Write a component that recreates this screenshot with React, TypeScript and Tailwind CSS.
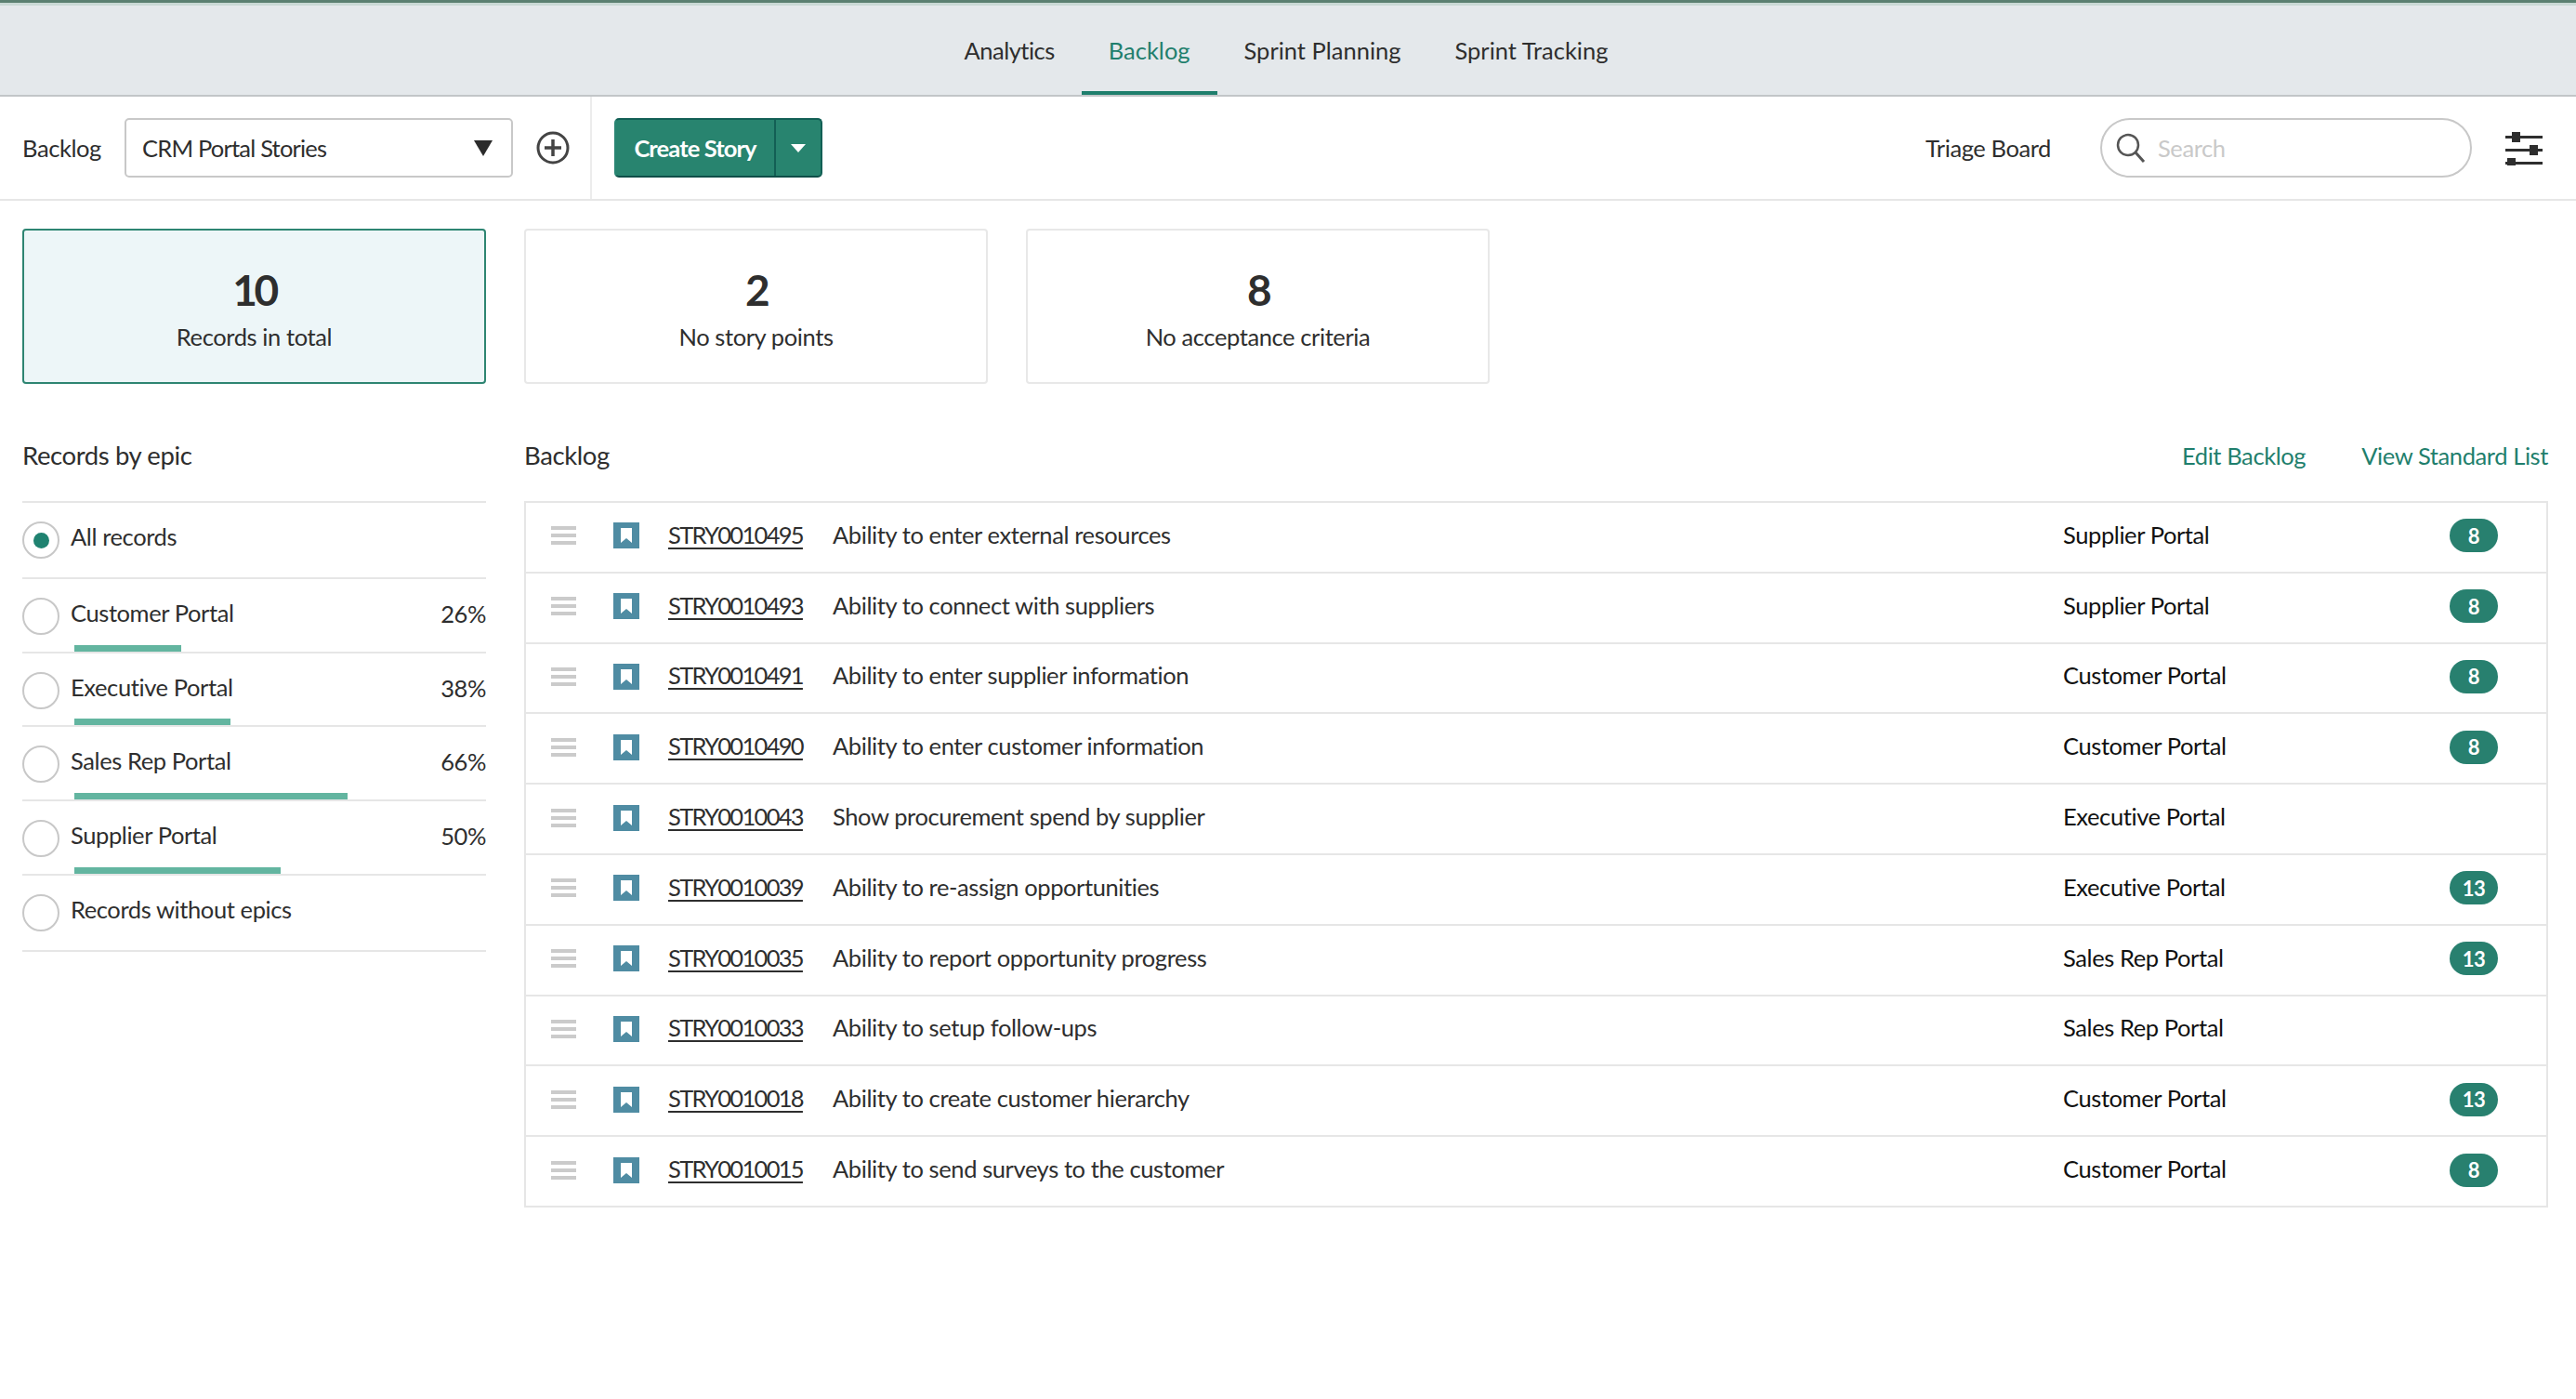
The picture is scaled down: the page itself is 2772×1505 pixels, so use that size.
import React from "react";

const stories = [
  ["STRY0010495", "Ability to enter external resources", "Supplier Portal", "8"],
  ["STRY0010493", "Ability to connect with suppliers", "Supplier Portal", "8"],
  ["STRY0010491", "Ability to enter supplier information", "Customer Portal", "8"],
  ["STRY0010490", "Ability to enter customer information", "Customer Portal", "8"],
  ["STRY0010043", "Show procurement spend by supplier", "Executive Portal", ""],
  ["STRY0010039", "Ability to re-assign opportunities", "Executive Portal", "13"],
  ["STRY0010035", "Ability to report opportunity progress", "Sales Rep Portal", "13"],
  ["STRY0010033", "Ability to setup follow-ups", "Sales Rep Portal", ""],
  ["STRY0010018", "Ability to create customer hierarchy", "Customer Portal", "13"],
  ["STRY0010015", "Ability to send surveys to the customer", "Customer Portal", "8"],
];

const epics = [
  { name: "All records", pct: "", bar: "", h: "h-[82px]", selected: true },
  { name: "Customer Portal", pct: "26%", bar: "w-[115px]", h: "h-[80px]" },
  { name: "Executive Portal", pct: "38%", bar: "w-[168px]", h: "h-[79px]" },
  { name: "Sales Rep Portal", pct: "66%", bar: "w-[294px]", h: "h-[80px]" },
  { name: "Supplier Portal", pct: "50%", bar: "w-[222px]", h: "h-[80px]" },
  { name: "Records without epics", pct: "", bar: "", h: "h-[82px]" },
];

const tabs = [
  { t: "Analytics", c: "border-transparent tracking-[-0.5px] text-[#2e2e2e]" },
  { t: "Backlog", c: "border-[#1f7f6d] tracking-[0px] text-[#1f7f6d]" },
  { t: "Sprint Planning", c: "border-transparent tracking-[0px] text-[#2e2e2e]" },
  { t: "Sprint Tracking", c: "border-transparent tracking-[0px] text-[#2e2e2e]" },
];

const Bookmark = () => (
  <svg width="28" height="28" viewBox="0 0 28 28" className="shrink-0">
    <rect width="28" height="28" fill="#4f8ca3" />
    <path d="M8 6h12v16l-6-5-6 5z" fill="#fff" />
  </svg>
);

const Handle = () => (
  <div className="flex w-[27px] shrink-0 flex-col gap-[4px]">
    <div className="h-[4px] bg-[#cbcbcb]" />
    <div className="h-[4px] bg-[#cbcbcb]" />
    <div className="h-[4px] bg-[#cbcbcb]" />
  </div>
);

const Card = ({ n, label, active }: { n: string; label: string; active?: boolean }) => (
  <div
    className={
      active
        ? "flex h-[167px] w-[499px] flex-col items-center rounded-[4px] border-2 border-[#2e8572] bg-[#edf6f8] pt-[38px]"
        : "flex h-[167px] w-[499px] flex-col items-center rounded-[4px] border-2 border-[#e8e8e8] bg-white pt-[38px]"
    }
  >
    <div className="text-[46px] leading-[52px] font-bold tracking-[-3.5px] text-[#2e2e2e]">{n}</div>
    <div className="mt-[8px] leading-[32px] text-[#2e2e2e]">{label}</div>
  </div>
);

export default function App() {
  return (
    <div className="h-[1505px] w-[2772px] overflow-hidden bg-white font-['Lato',sans-serif] text-[25.5px] tracking-[-0.4px] text-[#2e2e2e]">
      <header className="flex h-[104px] justify-center border-t-[3px] border-b-2 border-t-[#5b8071] border-b-[#c2c6c8] bg-[#e4e8eb] pr-[4px] shadow-[inset_0_3px_0_#c9d9d5]">
        {tabs.map(({ t, c }) => (
          <div key={t} className={`flex h-[99px] items-center border-b-[4px] px-[29px] pt-[7px] ${c}`}>
            {t}
          </div>
        ))}
      </header>

      <div className="flex h-[112px] items-center border-b-2 border-[#e6e6e6]">
        <div className="flex h-full w-[637px] shrink-0 items-center border-r-2 border-[#ececec] pl-[24px]">
          <span className="w-[110px]">Backlog</span>
          <div className="flex h-[64px] w-[418px] items-center justify-between rounded-[5px] border-2 border-[#c8c8c8] pr-[20px] pl-[17px]">
            <span className="tracking-[-0.8px]">CRM Portal Stories</span>
            <svg width="20" height="17" viewBox="0 0 20 17">
              <path d="M0 0h20L10 17z" fill="#2b2b2b" />
            </svg>
          </div>
          <svg width="36" height="36" viewBox="0 0 36 36" className="ml-[25px]">
            <circle cx="18" cy="18" r="16" fill="none" stroke="#444" strokeWidth="3" />
            <path d="M18 9v18M9 18h18" stroke="#444" strokeWidth="3.5" />
          </svg>
        </div>
        <div className="ml-[24px] flex h-[64px] w-[224px] items-stretch rounded-[5px] border-2 border-t-[#125f55] border-r-[#125f55] border-b-[#0f4f49] border-l-[#2a8573] bg-[#28846f] text-white">
          <span className="flex w-[170px] items-center justify-center font-bold tracking-[-0.9px]">Create Story</span>
          <span className="flex flex-1 items-center justify-center border-l-2 border-[#135f55]">
            <svg width="16" height="9" viewBox="0 0 16 9">
              <path d="M0 0h16L8 9z" fill="#fff" />
            </svg>
          </span>
        </div>
        <span className="ml-auto">Triage Board</span>
        <div className="ml-[53px] flex h-[64px] w-[400px] items-center rounded-full border-2 border-[#c8c8c8] pl-[15px]">
          <svg width="32" height="32" viewBox="0 0 32 32">
            <circle cx="13" cy="13" r="11" fill="none" stroke="#555" strokeWidth="2.5" />
            <path d="M21 21l9 10" stroke="#555" strokeWidth="3" />
          </svg>
          <span className="ml-[13px] text-[#c9c9c9]">Search</span>
        </div>
        <svg width="40" height="38" viewBox="0 0 40 38" className="mr-[36px] ml-[36px]">
          <g fill="#2e2e2e">
            <rect x="0" y="6" width="40" height="3" />
            <rect x="7" y="2" width="9" height="11" />
            <rect x="0" y="20" width="40" height="3" />
            <rect x="26" y="16" width="9" height="11" />
            <rect x="0" y="34" width="40" height="3" />
            <rect x="2" y="30" width="9" height="8" />
          </g>
        </svg>
      </div>

      <div className="mt-[30px] flex gap-[41px] pl-[24px]">
        <Card n="10" label="Records in total" active />
        <Card n="2" label="No story points" />
        <Card n="8" label="No acceptance criteria" />
      </div>

      <div className="mt-[52px] flex gap-[41px] pr-[30px] pl-[24px]">
        <aside className="w-[499px] shrink-0">
          <div className="flex h-[74px] items-start text-[27.5px]">
            <span className="mt-[9px] leading-[32px]">Records by epic</span>
          </div>
          <div className="border-t-2 border-[#e6e6e6]">
            {epics.map((e) => (
              <div key={e.name} className={`${e.h} flex flex-col justify-between border-b-2 border-[#e6e6e6]`}>
                <div className="mt-[17px] flex items-center">
                  <div className="flex h-[40px] w-[40px] items-center justify-center rounded-full border-2 border-[#c8c8c8]">
                    {e.selected && <div className="h-[17px] w-[17px] rounded-full bg-[#1f8270]" />}
                  </div>
                  <span className="mb-[8px] ml-[12px] flex-1">{e.name}</span>
                  <span className="mb-[7px]">{e.pct}</span>
                </div>
                {e.bar && <div className={`${e.bar} ml-[56px] h-[7px] bg-[#63b5a0]`} />}
              </div>
            ))}
          </div>
        </aside>

        <main className="flex-1">
          <div className="flex h-[74px] items-start">
            <span className="mt-[9px] flex-1 text-[27.5px] leading-[32px]">Backlog</span>
            <span className="mt-[9px] leading-[32px] text-[#1f7f6d]">Edit Backlog</span>
            <span className="mt-[9px] ml-[60px] leading-[32px] text-[#1f7f6d]">View Standard List</span>
          </div>
          <div className="border-2 border-b-0 border-[#e6e6e6]">
            {stories.map(([id, title, portal, pts]) => (
              <div key={id} className="flex h-[75.8px] items-center border-b-2 border-[#e6e6e6] pb-[3px] pl-[27px]">
                <Handle />
                <div className="ml-[40px]">
                  <Bookmark />
                </div>
                <a className="mb-[3px] ml-[31px] w-[177px] shrink-0 tracking-[-1.7px] underline decoration-[2px] underline-offset-[4px]">{id}</a>
                <span className="mb-[3px] flex-1 text-[#2e2e2e]">{title}</span>
                <span className="mb-[3px] w-[416px] shrink-0 text-[#111]">{portal}</span>
                {pts ? (
                  <span className="mr-[52px] flex h-[36px] w-[52px] shrink-0 items-center justify-center rounded-[18px] bg-[#28806f]">
                    <span className="text-[22px] font-bold text-white">{pts}</span>
                  </span>
                ) : (
                  <span className="mr-[52px] w-[52px] shrink-0" />
                )}
              </div>
            ))}
          </div>
        </main>
      </div>
    </div>
  );
}
